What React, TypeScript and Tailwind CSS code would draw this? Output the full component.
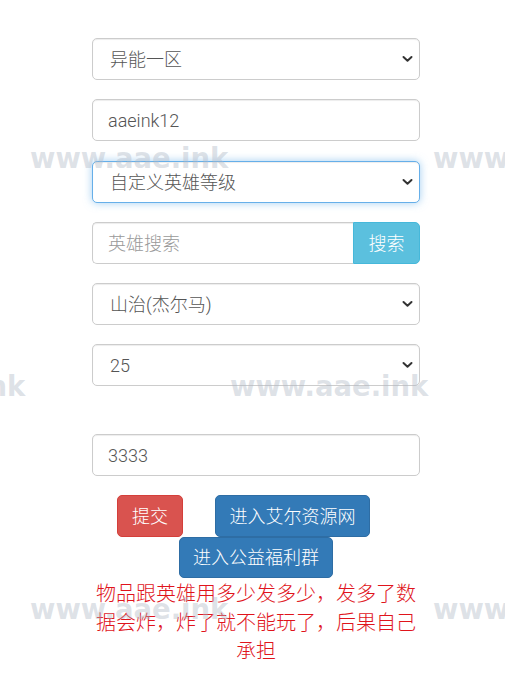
import React from 'react'

const font = { fontFamily: 'Roboto, "Noto Sans CJK SC", sans-serif' }

function Chevron() {
  return (
    <svg
      className="pointer-events-none absolute right-[7px] top-1/2 -translate-y-1/2"
      width="11"
      height="7"
      viewBox="0 0 11 7"
      fill="none"
    >
      <path d="M1.5 1.5L5.5 5.2L9.5 1.5" stroke="#333" strokeWidth="2" strokeLinecap="round" strokeLinejoin="round" />
    </svg>
  )
}

function Select({ value, options, focused = false, className = '' }: { value: string; options: string[]; focused?: boolean; className?: string }) {
  return (
    <div className={`relative ${className}`}>
      <select
        defaultValue={value}
        className={`block h-[42px] w-full appearance-none rounded-[5px] border bg-white pl-[17px] pr-8 text-[18px] font-light text-[#555] outline-none ${
          focused
            ? 'border-[#66afe9] shadow-[inset_0_1px_1px_rgba(0,0,0,0.075),0_0_8px_rgba(102,175,233,0.6)]'
            : 'border-[#ccc] shadow-[inset_0_1px_1px_rgba(0,0,0,0.075)]'
        }`}
        style={font}
      >
        {options.map((o) => (
          <option key={o}>{o}</option>
        ))}
      </select>
      <Chevron />
    </div>
  )
}

const marks = [
  { top: 141, left: 30 },
  { top: 141, left: 433 },
  { top: 369, left: -173 },
  { top: 369, left: 230 },
  { top: 592, left: 30 },
  { top: 592, left: 433 },
]

export default function App() {
  return (
    <div className="relative h-[692px] w-full overflow-hidden bg-white" style={font}>
      <div className="ml-[92px] flex w-[328px] flex-col pt-[38px]">
        <Select value="异能一区" options={['异能一区', '异能二区']} />

        <input
          defaultValue="aaeink12"
          className="mt-[19px] block h-[42px] w-full rounded-[5px] border border-[#ccc] bg-white px-[15px] text-[18px] font-light text-[#555] shadow-[inset_0_1px_1px_rgba(0,0,0,0.075)] outline-none"
          style={font}
        />

        <Select className="mt-[20px]" value="自定义英雄等级" options={['自定义英雄等级']} focused />

        {/* 英雄搜索 */}
        <div className="mt-[19px] flex h-[42px] w-full">
          <input
            placeholder="英雄搜索"
            className="block h-full min-w-0 flex-1 rounded-l-[5px] border border-r-0 border-[#ccc] bg-white px-[15px] text-[18px] font-light text-[#555] shadow-[inset_0_1px_1px_rgba(0,0,0,0.075)] outline-none placeholder:text-[#999]"
            style={font}
          />
          <button className="h-full w-[67px] rounded-r-[5px] border border-[#46b8da] bg-[#5bc0de] text-[18px] font-light text-white" style={font}>
            搜索
          </button>
        </div>

        <Select className="mt-[19px]" value="山治(杰尔马)" options={['山治(杰尔马)']} />
        <Select className="mt-[19px]" value="25" options={['25']} />

        <input
          defaultValue="3333"
          className="mt-[48px] block h-[42px] w-full rounded-[5px] border border-[#ccc] bg-white px-[15px] text-[18px] font-light text-[#555] shadow-[inset_0_1px_1px_rgba(0,0,0,0.075)] outline-none"
          style={font}
        />

        <div className="mt-[19px] flex pl-[25px]">
          <button className="h-[42px] w-[66px] rounded-[5px] border border-[#d43f3a] bg-[#d9534f] text-[18px] font-light text-white" style={font}>
            提交
          </button>
          <button className="ml-[32px] h-[42px] w-[155px] rounded-[5px] border border-[#2e6da4] bg-[#337ab7] text-[18px] font-light text-white" style={font}>
            进入艾尔资源网
          </button>
        </div>
        <div className="flex justify-center">
          <button className="h-[41px] w-[154px] rounded-[5px] border border-[#2e6da4] bg-[#337ab7] text-[18px] font-light text-white" style={font}>
            进入公益福利群
          </button>
        </div>

        <p className="mt-[2px] text-center text-[20px] font-light leading-[28.5px] text-[#e0141c]">
          物品跟英雄用多少发多少，发多了数据会炸，炸了就不能玩了，后果自己承担
        </p>
      </div>

      {/* watermark */}
      <div className="pointer-events-none absolute inset-0">
        {marks.map((m, i) => (
          <span
            key={i}
            className="absolute whitespace-nowrap text-[27.5px] font-bold leading-[34px] text-[rgba(175,184,197,0.42)]"
            style={{ top: m.top, left: m.left, fontFamily: '"DejaVu Sans", Verdana, sans-serif' }}
          >
            www.aae.ink
          </span>
        ))}
      </div>
    </div>
  )
}
